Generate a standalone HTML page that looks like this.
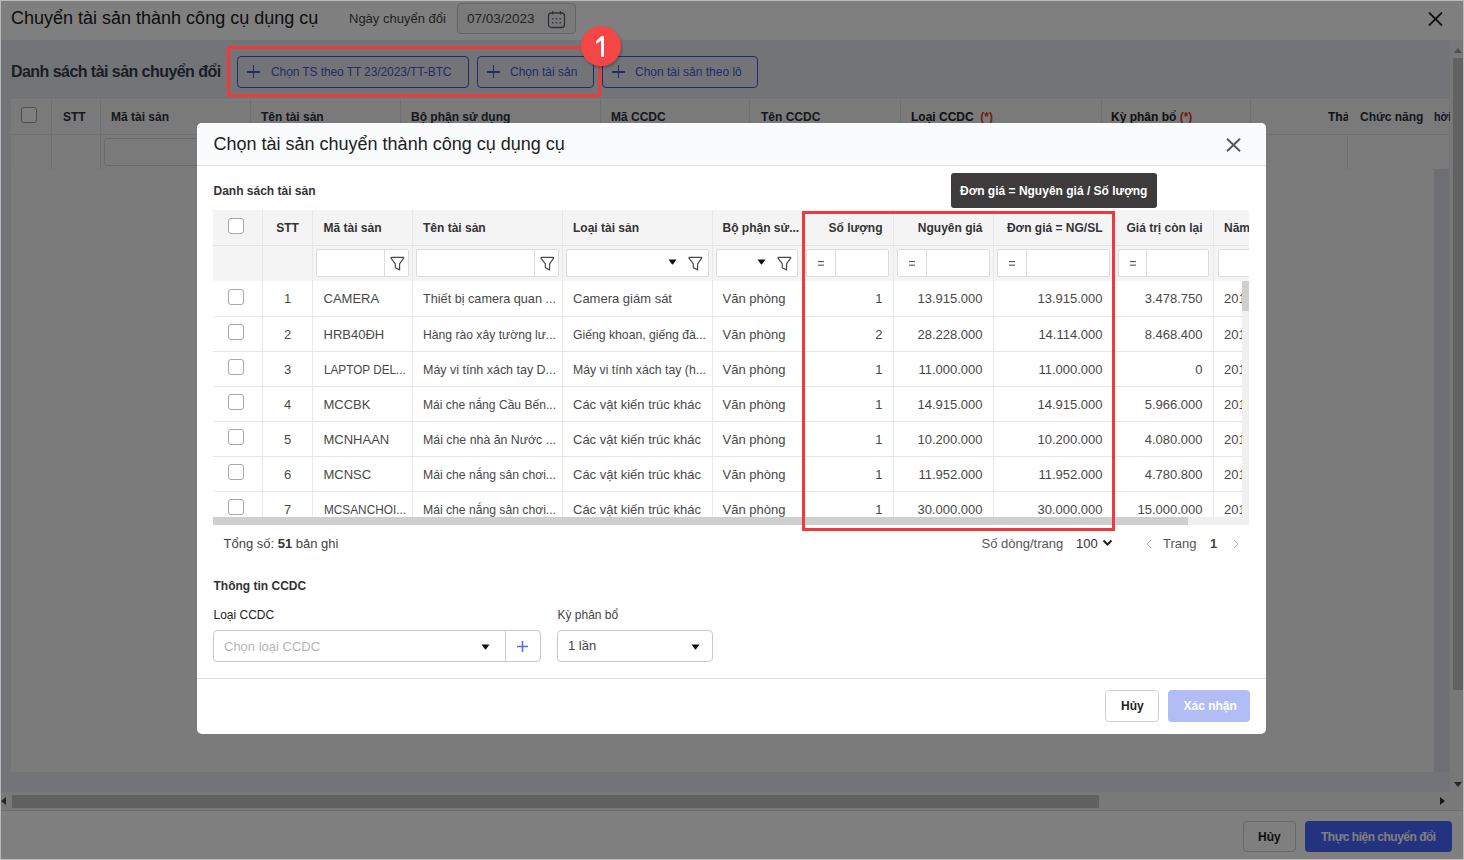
<!DOCTYPE html>
<html><head><meta charset="utf-8">
<style>
*{box-sizing:border-box;margin:0;padding:0}
html,body{width:1464px;height:860px;overflow:hidden;background:#e6e8ee;font-family:"Liberation Sans",sans-serif;color:#212121}
.a{position:absolute}
.t{position:absolute;white-space:nowrap;line-height:1}
.b{font-weight:bold}
#bg{position:absolute;left:0;top:0;width:1464px;height:860px;background:#e6e8ee}
#ov{position:absolute;left:0;top:0;width:1464px;height:860px;background:rgba(0,0,0,0.5)}
.btnb{position:absolute;border:1px solid #4558d8;border-radius:4px;background:#e6e8ee}
.plus{position:absolute;width:13px;height:13px}
.plus:before{content:"";position:absolute;left:0;top:6px;width:13px;height:1.6px;background:currentColor}
.plus:after{content:"";position:absolute;left:5.7px;top:0;width:1.6px;height:13px;background:currentColor}
.vl{position:absolute;width:1px;background:#e0e0e0}
.hl{position:absolute;height:1px;background:#e0e0e0}
#modal{position:absolute;left:197px;top:123px;width:1069px;height:611px;background:#fff;border-radius:5px;overflow:hidden}
.cb{position:absolute;width:16px;height:16px;border:1px solid #a8a8a8;border-radius:3px;background:#fff}
.cell{position:absolute;white-space:nowrap;line-height:1;font-size:13px;color:#484848}
.hd{position:absolute;white-space:nowrap;line-height:1;font-size:12px;font-weight:bold;color:#333}
.fin{position:absolute;border:1px solid #dcdcdc;background:#fff;border-radius:2px}
</style></head><body>
<div id="bg">
  <!-- header -->
  <div class="a" style="left:0;top:0;width:1464px;height:40px;background:#fff"></div>
  <div class="t" style="left:11px;top:8.8px;font-size:18px;color:#1a1a1a">Chuyển tài sản thành công cụ dụng cụ</div>
  <div class="t" style="left:349px;top:12px;font-size:13px;color:#444">Ngày chuyển đổi</div>
  <div class="a" style="left:457px;top:3px;width:119px;height:31px;border:1px solid #c8c8c8;border-radius:4px;background:#f4f4f4"></div>
  <div class="t" style="left:467px;top:11.6px;font-size:13.5px;color:#484848">07/03/2023</div>
  <svg class="a" style="left:547px;top:10px" width="19" height="19" viewBox="0 0 19 19"><rect x="1.5" y="3" width="16" height="14.5" rx="3" fill="none" stroke="#5f6470" stroke-width="1.3"/><line x1="5.5" y1="1" x2="5.5" y2="4.5" stroke="#5f6470" stroke-width="1.3"/><line x1="13.5" y1="1" x2="13.5" y2="4.5" stroke="#5f6470" stroke-width="1.3"/><g fill="#6a6f7a"><rect x="5" y="8" width="1.5" height="1.5"/><rect x="8.8" y="8" width="1.5" height="1.5"/><rect x="12.5" y="8" width="1.5" height="1.5"/><rect x="5" y="12" width="1.5" height="1.5"/><rect x="8.8" y="12" width="1.5" height="1.5"/><rect x="12.5" y="12" width="1.5" height="1.5"/></g></svg>
  <svg class="a" style="left:1428px;top:12px" width="15" height="14" viewBox="0 0 15 14"><path d="M1 0.5L14 13.5M14 0.5L1 13.5" stroke="#222" stroke-width="1.8"/></svg>

  <!-- section title + buttons -->
  <div class="t b" style="left:11px;top:63.5px;font-size:16px;color:#363c4c;letter-spacing:-0.55px">Danh sách tài sản chuyển đổi</div>
  <div class="btnb" style="left:237px;top:56px;width:232px;height:32px"></div>
  <div class="plus" style="left:247px;top:65px;color:#4558d8"></div>
  <div class="t" style="left:271px;top:65.5px;font-size:12px;color:#4558d8;letter-spacing:-0.1px">Chọn TS theo TT 23/2023/TT-BTC</div>
  <div class="btnb" style="left:477px;top:56px;width:117px;height:32px"></div>
  <div class="plus" style="left:487px;top:65px;color:#4558d8"></div>
  <div class="t" style="left:510px;top:65.5px;font-size:12px;color:#4558d8">Chọn tài sản</div>
  <div class="btnb" style="left:602px;top:56px;width:156px;height:32px"></div>
  <div class="plus" style="left:612px;top:65px;color:#4558d8"></div>
  <div class="t" style="left:635px;top:65.5px;font-size:12px;color:#4558d8">Chọn tài sản theo lô</div>

  <!-- bg table -->
  <div class="a" style="left:11px;top:99px;width:1438px;height:35px;background:#f4f4f4"></div>
  <div class="a" style="left:11px;top:134px;width:1438px;height:35px;background:#f4f4f4;border-top:1px solid #e0e0e0"></div>
  <div class="a" style="left:11px;top:169px;width:1423px;height:603px;background:#f6f7f9"></div>
  <div class="a" style="left:1434px;top:169px;width:15px;height:603px;background:#dcdfe5"></div>

  <!-- bg table header texts -->
  <div class="cb" style="left:21px;top:107px;width:16px;height:16px;background:#fff;border-color:#9e9e9e"></div>
  <div class="vl" style="left:51px;top:99px;height:70px;background:#dedede"></div>
  <div class="vl" style="left:100px;top:99px;height:70px;background:#dedede"></div>
  <div class="vl" style="left:250px;top:99px;height:35px;background:#dedede"></div>
  <div class="vl" style="left:400px;top:99px;height:35px;background:#dedede"></div>
  <div class="vl" style="left:600px;top:99px;height:35px;background:#dedede"></div>
  <div class="vl" style="left:749px;top:99px;height:35px;background:#dedede"></div>
  <div class="vl" style="left:900px;top:99px;height:35px;background:#dedede"></div>
  <div class="vl" style="left:1101px;top:99px;height:35px;background:#dedede"></div>
  <div class="vl" style="left:1250px;top:99px;height:35px;background:#dedede"></div>
  <div class="vl" style="left:1347px;top:135px;height:34px;background:#dedede"></div>
  <div class="hl" style="left:11px;top:99px;width:1438px;background:#fafafa"></div>
  <div class="t b" style="left:63px;top:111px;font-size:12px;color:#2c303c">STT</div>
  <div class="t b" style="left:111px;top:111px;font-size:12px;color:#2c303c">Mã tài sản</div>
  <div class="t b" style="left:261px;top:111px;font-size:12px;color:#2c303c">Tên tài sản</div>
  <div class="t b" style="left:411px;top:111px;font-size:12px;color:#2c303c">Bộ phận sử dụng</div>
  <div class="t b" style="left:611px;top:111px;font-size:12px;color:#2c303c">Mã CCDC</div>
  <div class="t b" style="left:761px;top:111px;font-size:12px;color:#2c303c">Tên CCDC</div>
  <div class="t b" style="left:911px;top:111px;font-size:12px;color:#222">Loại CCDC&nbsp; <span style="color:#e53935">(*)</span></div>
  <div class="t b" style="left:1111px;top:111px;font-size:12px;color:#222">Kỳ phân bổ <span style="color:#e53935">(*)</span></div>
  <div class="a" style="left:1328px;top:105px;width:20px;height:24px;overflow:hidden"><div class="t b" style="left:0;top:6px;font-size:12px;color:#222">Thả</div></div>
  <div class="t b" style="left:1360px;top:111px;font-size:12px;color:#2c303c">Chức năng</div>
  <div class="a" style="left:1434px;top:105px;width:17px;height:24px;overflow:hidden"><div class="t b" style="left:0;top:6px;font-size:12px;color:#2a3060;transform:scaleX(0.9);transform-origin:0 0">hời</div></div>
  <div class="a" style="left:104px;top:138px;width:150px;height:28px;border:1px solid #d6d6d6;border-radius:3px;background:#f4f4f4"></div>

  <!-- scrollbars -->
  <div class="a" style="left:1450px;top:40px;width:14px;height:753px;background:#f0f0f0"></div>
  <div class="a" style="left:1453px;top:58px;width:10px;height:632px;background:#c4c4c4"></div>
  <svg class="a" style="left:1453px;top:46px" width="10" height="8"><path d="M1 7L5 2L9 7Z" fill="#a0a0a0"/></svg>
  <svg class="a" style="left:1453px;top:781px" width="10" height="8"><path d="M1 1L5 6L9 1Z" fill="#505050"/></svg>
  <div class="a" style="left:0;top:792px;width:1464px;height:19px;background:#f2f2f2;border-bottom:1px solid #dcdcdc"></div>
  <div class="a" style="left:12px;top:795px;width:1087px;height:13px;background:#c2c2c2"></div>
  <svg class="a" style="left:0px;top:796px" width="8" height="10"><path d="M6 1L1 5L6 9Z" fill="#505050"/></svg>
  <svg class="a" style="left:1439px;top:796px" width="8" height="10"><path d="M1 1L6 5L1 9Z" fill="#303030"/></svg>

  <!-- footer -->
  <div class="a" style="left:0;top:811px;width:1464px;height:49px;background:#fff"></div>
  <div class="a" style="left:1243px;top:821px;width:53px;height:31px;border:1px solid #d0d0d0;border-radius:4px;background:#fff"></div>
  <div class="t b" style="left:1258px;top:830.5px;font-size:12px;color:#222">Hủy</div>
  <div class="a" style="left:1305px;top:821px;width:147px;height:31px;border-radius:4px;background:#4a64ff"></div>
  <div class="t b" style="left:1321px;top:830.5px;font-size:12px;color:#ffffff;letter-spacing:-0.5px">Thực hiện chuyển đổi</div>
  <div class="a" style="left:0;top:0;width:1464px;height:1px;background:#fff"></div>
</div>
<div id="ov"></div>

<div id="modal"></div>
<div id="mc">
  <div class="a" style="left:197px;top:123px;width:1069px;height:43px;background:#fafbfc;border-radius:5px 5px 0 0;border-bottom:1px solid #e0e0e0"></div>
  <div class="t" style="left:213.5px;top:134.8px;font-size:18px;color:#212121">Chọn tài sản chuyển thành công cụ dụng cụ</div>
  <svg class="a" style="left:1226px;top:138px" width="15" height="14" viewBox="0 0 15 14"><path d="M1 0.8L14 13.2M14 0.8L1 13.2" stroke="#555" stroke-width="1.9"/></svg>
  <div class="t b" style="left:213.5px;top:184.8px;font-size:12px;color:#333">Danh sách tài sản</div>
<!--TABLE-->
<div class="a" style="left:213px;top:210px;width:1036px;height:315px;overflow:hidden">
<div class="a" style="left:0;top:0;width:1200px;height:71px;background:#f4f4f4"></div>
<div class="hl" style="left:0;top:35px;width:1200px;background:#e3e3e3"></div>
<div class="hl" style="left:0;top:106.0px;width:1200px;background:#e6e6e6"></div>
<div class="hl" style="left:0;top:141.0px;width:1200px;background:#e6e6e6"></div>
<div class="hl" style="left:0;top:176.0px;width:1200px;background:#e6e6e6"></div>
<div class="hl" style="left:0;top:211.0px;width:1200px;background:#e6e6e6"></div>
<div class="hl" style="left:0;top:246.0px;width:1200px;background:#e6e6e6"></div>
<div class="hl" style="left:0;top:281.0px;width:1200px;background:#e6e6e6"></div>
<div class="hl" style="left:0;top:316.0px;width:1200px;background:#e6e6e6"></div>
<div class="vl" style="left:49.0px;top:0;height:320px;background:#e8e8e8"></div>
<div class="vl" style="left:99.0px;top:0;height:320px;background:#e8e8e8"></div>
<div class="vl" style="left:199.0px;top:0;height:320px;background:#e8e8e8"></div>
<div class="vl" style="left:349.0px;top:0;height:320px;background:#e8e8e8"></div>
<div class="vl" style="left:499.0px;top:0;height:320px;background:#e8e8e8"></div>
<div class="vl" style="left:590.0px;top:0;height:320px;background:#e8e8e8"></div>
<div class="vl" style="left:680.0px;top:0;height:320px;background:#e8e8e8"></div>
<div class="vl" style="left:780.0px;top:0;height:320px;background:#e8e8e8"></div>
<div class="vl" style="left:900.0px;top:0;height:320px;background:#e8e8e8"></div>
<div class="vl" style="left:1000.0px;top:0;height:320px;background:#e8e8e8"></div>
<div class="cb" style="left:15.0px;top:8.0px"></div>
<div class="hd" style="left:49.5px;top:11.8px;width:50px;text-align:center">STT</div>
<div class="hd" style="left:110.5px;top:11.8px">Mã tài sản</div>
<div class="hd" style="left:210.0px;top:11.8px">Tên tài sản</div>
<div class="hd" style="left:360.0px;top:11.8px">Loại tài sản</div>
<div class="hd" style="left:509.5px;top:11.8px">Bộ phận sử...</div>
<div class="hd" style="left:469.5px;top:11.8px;width:200px;text-align:right">Số lượng</div>
<div class="hd" style="left:569.5px;top:11.8px;width:200px;text-align:right">Nguyên giá</div>
<div class="hd" style="left:689.5px;top:11.8px;width:200px;text-align:right">Đơn giá = NG/SL</div>
<div class="hd" style="left:789.5px;top:11.8px;width:200px;text-align:right">Giá trị còn lại</div>
<div class="hd" style="left:1011.0px;top:11.8px">Năm sử dụng</div>
<div class="fin" style="left:103.0px;top:39.0px;width:93.0px;height:28px"></div>
<div class="vl" style="left:171.0px;top:40.0px;height:26px;background:#dcdcdc"></div>
<svg class="a" style="left:176.5px;top:45.5px" width="15" height="15" viewBox="0 0 15 15"><path d="M1.6 1.3H13.2Q14.2 1.3 13.6 2.2L9.6 7.9V13.9L5.3 11.8V7.9L1 2.2Q0.6 1.3 1.6 1.3Z" fill="none" stroke="#4a4a4a" stroke-width="1.2" stroke-linejoin="round"/></svg>
<div class="fin" style="left:203.0px;top:39.0px;width:143.0px;height:28px"></div>
<div class="vl" style="left:321.0px;top:40.0px;height:26px;background:#dcdcdc"></div>
<svg class="a" style="left:326.5px;top:45.5px" width="15" height="15" viewBox="0 0 15 15"><path d="M1.6 1.3H13.2Q14.2 1.3 13.6 2.2L9.6 7.9V13.9L5.3 11.8V7.9L1 2.2Q0.6 1.3 1.6 1.3Z" fill="none" stroke="#4a4a4a" stroke-width="1.2" stroke-linejoin="round"/></svg>
<div class="fin" style="left:353.0px;top:39.0px;width:143.0px;height:28px"></div>
<svg class="a" style="left:455.0px;top:49.0px" width="9" height="6" viewBox="0 0 9 6"><path d="M0.5 0.5H8.5L5 5.2Q4.5 5.8 4 5.2Z" fill="#111"/></svg>
<svg class="a" style="left:474.5px;top:45.5px" width="15" height="15" viewBox="0 0 15 15"><path d="M1.6 1.3H13.2Q14.2 1.3 13.6 2.2L9.6 7.9V13.9L5.3 11.8V7.9L1 2.2Q0.6 1.3 1.6 1.3Z" fill="none" stroke="#4a4a4a" stroke-width="1.2" stroke-linejoin="round"/></svg>
<div class="fin" style="left:503.0px;top:39.0px;width:82.0px;height:28px"></div>
<svg class="a" style="left:544.0px;top:49.0px" width="9" height="6" viewBox="0 0 9 6"><path d="M0.5 0.5H8.5L5 5.2Q4.5 5.8 4 5.2Z" fill="#111"/></svg>
<svg class="a" style="left:563.5px;top:45.5px" width="15" height="15" viewBox="0 0 15 15"><path d="M1.6 1.3H13.2Q14.2 1.3 13.6 2.2L9.6 7.9V13.9L5.3 11.8V7.9L1 2.2Q0.6 1.3 1.6 1.3Z" fill="none" stroke="#4a4a4a" stroke-width="1.2" stroke-linejoin="round"/></svg>
<div class="fin" style="left:593.0px;top:39.0px;width:83.0px;height:28px"></div>
<div class="vl" style="left:621.5px;top:40.0px;height:26px;background:#dcdcdc"></div>
<svg class="a" style="left:605.0px;top:51.0px" width="6" height="5" viewBox="0 0 6 5"><rect x="0" y="0" width="6" height="1.1" fill="#555"/><rect x="0" y="3.6" width="6" height="1.1" fill="#555"/></svg>
<div class="fin" style="left:684.0px;top:39.0px;width:92.5px;height:28px"></div>
<div class="vl" style="left:712.5px;top:40.0px;height:26px;background:#dcdcdc"></div>
<svg class="a" style="left:696.0px;top:51.0px" width="6" height="5" viewBox="0 0 6 5"><rect x="0" y="0" width="6" height="1.1" fill="#555"/><rect x="0" y="3.6" width="6" height="1.1" fill="#555"/></svg>
<div class="fin" style="left:784.0px;top:39.0px;width:112.5px;height:28px"></div>
<div class="vl" style="left:812.5px;top:40.0px;height:26px;background:#dcdcdc"></div>
<svg class="a" style="left:796.0px;top:51.0px" width="6" height="5" viewBox="0 0 6 5"><rect x="0" y="0" width="6" height="1.1" fill="#555"/><rect x="0" y="3.6" width="6" height="1.1" fill="#555"/></svg>
<div class="fin" style="left:904.5px;top:39.0px;width:91.5px;height:28px"></div>
<div class="vl" style="left:933.0px;top:40.0px;height:26px;background:#dcdcdc"></div>
<svg class="a" style="left:916.5px;top:51.0px" width="6" height="5" viewBox="0 0 6 5"><rect x="0" y="0" width="6" height="1.1" fill="#555"/><rect x="0" y="3.6" width="6" height="1.1" fill="#555"/></svg>
<div class="fin" style="left:1004.5px;top:39.0px;width:102.5px;height:28px"></div>
<div class="cb" style="left:15.0px;top:79.0px"></div>
<div class="cell" style="left:49.5px;top:81.7px;width:50px;text-align:center">1</div>
<div class="cell" style="left:110.5px;top:81.7px">CAMERA</div>
<div class="cell" style="left:210.0px;top:81.7px;transform:scaleX(0.9739);transform-origin:0 0">Thiết bị camera quan ...</div>
<div class="cell" style="left:360.0px;top:81.7px">Camera giám sát</div>
<div class="cell" style="left:509.5px;top:81.7px">Văn phòng</div>
<div class="cell" style="left:469.5px;top:81.7px;width:200px;text-align:right">1</div>
<div class="cell" style="left:569.5px;top:81.7px;width:200px;text-align:right">13.915.000</div>
<div class="cell" style="left:689.5px;top:81.7px;width:200px;text-align:right">13.915.000</div>
<div class="cell" style="left:789.5px;top:81.7px;width:200px;text-align:right">3.478.750</div>
<div class="cell" style="left:1011.0px;top:81.7px">201</div>
<div class="cb" style="left:15.0px;top:114.0px"></div>
<div class="cell" style="left:49.5px;top:117.9px;width:50px;text-align:center">2</div>
<div class="cell" style="left:110.5px;top:117.9px">HRB40ĐH</div>
<div class="cell" style="left:210.0px;top:117.9px;transform:scaleX(0.9348);transform-origin:0 0">Hàng rào xây tường lư...</div>
<div class="cell" style="left:360.0px;top:117.9px;transform:scaleX(0.9389);transform-origin:0 0">Giếng khoan, giếng đà...</div>
<div class="cell" style="left:509.5px;top:117.9px">Văn phòng</div>
<div class="cell" style="left:469.5px;top:117.9px;width:200px;text-align:right">2</div>
<div class="cell" style="left:569.5px;top:117.9px;width:200px;text-align:right">28.228.000</div>
<div class="cell" style="left:689.5px;top:117.9px;width:200px;text-align:right">14.114.000</div>
<div class="cell" style="left:789.5px;top:117.9px;width:200px;text-align:right">8.468.400</div>
<div class="cell" style="left:1011.0px;top:117.9px">201</div>
<div class="cb" style="left:15.0px;top:149.0px"></div>
<div class="cell" style="left:49.5px;top:152.7px;width:50px;text-align:center">3</div>
<div class="cell" style="left:110.5px;top:152.7px;transform:scaleX(0.9031);transform-origin:0 0">LAPTOP DEL...</div>
<div class="cell" style="left:210.0px;top:152.7px;transform:scaleX(0.9588);transform-origin:0 0">Máy vi tính xách tay D...</div>
<div class="cell" style="left:360.0px;top:152.7px;transform:scaleX(0.9440);transform-origin:0 0">Máy vi tính xách tay (h...</div>
<div class="cell" style="left:509.5px;top:152.7px">Văn phòng</div>
<div class="cell" style="left:469.5px;top:152.7px;width:200px;text-align:right">1</div>
<div class="cell" style="left:569.5px;top:152.7px;width:200px;text-align:right">11.000.000</div>
<div class="cell" style="left:689.5px;top:152.7px;width:200px;text-align:right">11.000.000</div>
<div class="cell" style="left:789.5px;top:152.7px;width:200px;text-align:right">0</div>
<div class="cell" style="left:1011.0px;top:152.7px">201</div>
<div class="cb" style="left:15.0px;top:184.0px"></div>
<div class="cell" style="left:49.5px;top:188.0px;width:50px;text-align:center">4</div>
<div class="cell" style="left:110.5px;top:188.0px">MCCBK</div>
<div class="cell" style="left:210.0px;top:188.0px;transform:scaleX(0.9295);transform-origin:0 0">Mái che nắng Cầu Bến...</div>
<div class="cell" style="left:360.0px;top:188.0px">Các vật kiến trúc khác</div>
<div class="cell" style="left:509.5px;top:188.0px">Văn phòng</div>
<div class="cell" style="left:469.5px;top:188.0px;width:200px;text-align:right">1</div>
<div class="cell" style="left:569.5px;top:188.0px;width:200px;text-align:right">14.915.000</div>
<div class="cell" style="left:689.5px;top:188.0px;width:200px;text-align:right">14.915.000</div>
<div class="cell" style="left:789.5px;top:188.0px;width:200px;text-align:right">5.966.000</div>
<div class="cell" style="left:1011.0px;top:188.0px">201</div>
<div class="cb" style="left:15.0px;top:219.0px"></div>
<div class="cell" style="left:49.5px;top:223.1px;width:50px;text-align:center">5</div>
<div class="cell" style="left:110.5px;top:223.1px">MCNHAAN</div>
<div class="cell" style="left:210.0px;top:223.1px;transform:scaleX(0.9495);transform-origin:0 0">Mái che nhà ăn Nước ...</div>
<div class="cell" style="left:360.0px;top:223.1px">Các vật kiến trúc khác</div>
<div class="cell" style="left:509.5px;top:223.1px">Văn phòng</div>
<div class="cell" style="left:469.5px;top:223.1px;width:200px;text-align:right">1</div>
<div class="cell" style="left:569.5px;top:223.1px;width:200px;text-align:right">10.200.000</div>
<div class="cell" style="left:689.5px;top:223.1px;width:200px;text-align:right">10.200.000</div>
<div class="cell" style="left:789.5px;top:223.1px;width:200px;text-align:right">4.080.000</div>
<div class="cell" style="left:1011.0px;top:223.1px">201</div>
<div class="cb" style="left:15.0px;top:254.0px"></div>
<div class="cell" style="left:49.5px;top:257.9px;width:50px;text-align:center">6</div>
<div class="cell" style="left:110.5px;top:257.9px">MCNSC</div>
<div class="cell" style="left:210.0px;top:257.9px;transform:scaleX(0.9352);transform-origin:0 0">Mái che nắng sân chơi...</div>
<div class="cell" style="left:360.0px;top:257.9px">Các vật kiến trúc khác</div>
<div class="cell" style="left:509.5px;top:257.9px">Văn phòng</div>
<div class="cell" style="left:469.5px;top:257.9px;width:200px;text-align:right">1</div>
<div class="cell" style="left:569.5px;top:257.9px;width:200px;text-align:right">11.952.000</div>
<div class="cell" style="left:689.5px;top:257.9px;width:200px;text-align:right">11.952.000</div>
<div class="cell" style="left:789.5px;top:257.9px;width:200px;text-align:right">4.780.800</div>
<div class="cell" style="left:1011.0px;top:257.9px">201</div>
<div class="cb" style="left:15.0px;top:289.0px"></div>
<div class="cell" style="left:49.5px;top:292.7px;width:50px;text-align:center">7</div>
<div class="cell" style="left:110.5px;top:292.7px;transform:scaleX(0.9083);transform-origin:0 0">MCSANCHOI...</div>
<div class="cell" style="left:210.0px;top:292.7px;transform:scaleX(0.9352);transform-origin:0 0">Mái che nắng sân chơi...</div>
<div class="cell" style="left:360.0px;top:292.7px">Các vật kiến trúc khác</div>
<div class="cell" style="left:509.5px;top:292.7px">Văn phòng</div>
<div class="cell" style="left:469.5px;top:292.7px;width:200px;text-align:right">1</div>
<div class="cell" style="left:569.5px;top:292.7px;width:200px;text-align:right">30.000.000</div>
<div class="cell" style="left:689.5px;top:292.7px;width:200px;text-align:right">30.000.000</div>
<div class="cell" style="left:789.5px;top:292.7px;width:200px;text-align:right">15.000.000</div>
<div class="cell" style="left:1011.0px;top:292.7px">201</div>
<div class="a" style="left:0.0px;top:307.0px;width:1036px;height:8px;background:#f0f0f0"></div>
<div class="a" style="left:0.0px;top:307.0px;width:975px;height:8px;background:#cfcfcf"></div>
<div class="a" style="left:1029.0px;top:71.0px;width:7px;height:236px;background:#f0f0f0"></div>
<div class="a" style="left:1029.0px;top:71.0px;width:7px;height:30px;background:#cfcfcf"></div>
</div>
<!--/TABLE-->
  <div class="t" style="left:223.5px;top:536.6px;font-size:13px;color:#444">Tổng số: <b style="color:#333">51</b> bản ghi</div>
  <div class="t" style="left:981.5px;top:536.6px;font-size:13px;color:#555">Số dòng/trang</div>
  <div class="t" style="left:1076px;top:536.6px;font-size:13px;color:#333">100</div>
  <svg class="a" style="left:1102px;top:539px" width="11" height="8" viewBox="0 0 11 8"><path d="M1.5 1.5L5.5 5.5L9.5 1.5" fill="none" stroke="#222" stroke-width="2"/></svg>
  <svg class="a" style="left:1145px;top:539px" width="8" height="10" viewBox="0 0 8 10"><path d="M6 1L2 5L6 9" fill="none" stroke="#aaa" stroke-width="1"/></svg>
  <div class="t" style="left:1163px;top:536.6px;font-size:13px;color:#555">Trang</div>
  <div class="t b" style="left:1210px;top:536.6px;font-size:13px;color:#444">1</div>
  <svg class="a" style="left:1232px;top:539px" width="8" height="10" viewBox="0 0 8 10"><path d="M2 1L6 5L2 9" fill="none" stroke="#aaa" stroke-width="1"/></svg>

  <div class="t b" style="left:213.5px;top:579.8px;font-size:12px;color:#333">Thông tin CCDC</div>
  <div class="t" style="left:213.5px;top:608.8px;font-size:12px;color:#222">Loại CCDC</div>
  <div class="a" style="left:213px;top:630px;width:328px;height:32px;border:1px solid #c8c8c8;border-radius:4px;background:#fff"></div>
  <div class="vl" style="left:505px;top:631px;height:30px;background:#d0d0d0"></div>
  <div class="t" style="left:224px;top:639.6px;font-size:13px;color:#b5b5b5">Chọn loại CCDC</div>
  <svg class="a" style="left:481px;top:644px" width="9" height="6" viewBox="0 0 9 6"><path d="M0.5 0.5H8.5L5 5.2Q4.5 5.8 4 5.2Z" fill="#111"/></svg>
  <svg class="a" style="left:517px;top:641px" width="11" height="11" viewBox="0 0 11 11"><path d="M0 5.5H11M5.5 0V11" stroke="#4f6ef7" stroke-width="1.6"/></svg>
  <div class="t" style="left:557.5px;top:608.8px;font-size:12px;color:#444">Kỳ phân bổ</div>
  <div class="a" style="left:557px;top:630px;width:156px;height:32px;border:1px solid #c8c8c8;border-radius:4px;background:#fff"></div>
  <div class="t" style="left:568px;top:639.2px;font-size:13px;color:#444">1 lần</div>
  <svg class="a" style="left:691px;top:644px" width="9" height="6" viewBox="0 0 9 6"><path d="M0.5 0.5H8.5L5 5.2Q4.5 5.8 4 5.2Z" fill="#111"/></svg>

  <div class="hl" style="left:197px;top:678px;width:1069px;background:#dfe1e6"></div>
  <div class="a" style="left:1105px;top:690px;width:54px;height:32px;border:1px solid #d0d0d0;border-radius:4px;background:#fff"></div>
  <div class="t b" style="left:1121px;top:700px;font-size:12px;color:#222">Hủy</div>
  <div class="a" style="left:1168px;top:690px;width:82px;height:32px;border-radius:4px;background:#b3bdf5"></div>
  <div class="t b" style="left:1183.5px;top:700px;font-size:12px;color:#fff">Xác nhận</div>

  <!-- tooltip -->
  <div class="a" style="left:951px;top:173px;width:206px;height:35px;border-radius:3px;background:#3d3b3b"></div>
  <div class="t b" style="left:960px;top:184.5px;font-size:12px;color:#fff">Đơn giá = Nguyên giá / Số lượng</div>
</div>
<div class="a" style="left:0;top:0;width:1464px;height:860px;border:1px solid #bababa"></div>
<!-- annotations -->
<div class="a" style="left:227px;top:46px;width:374px;height:51px;border:3px solid #f0393c"></div>
<div class="a" style="left:802px;top:211px;width:313px;height:320px;border:3px solid #f0393c"></div>
<div class="a" style="left:581px;top:26px;width:40px;height:40px;border-radius:50%;background:#f44646;box-shadow:1px 2px 3px rgba(0,0,0,0.25)"></div>
<svg class="a" style="left:0;top:0" width="1464" height="860"><path d="M601 36.2H604V56.8H601V40.4L596.2 43.9V41.1Z" fill="#fff"/></svg>
</body></html>
